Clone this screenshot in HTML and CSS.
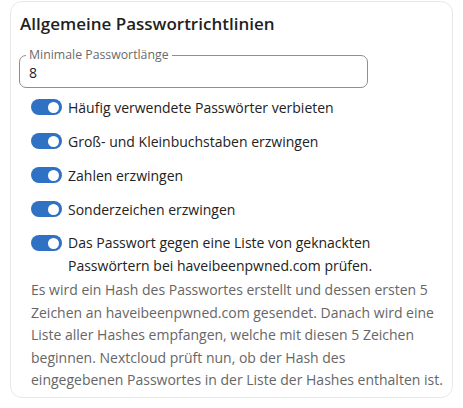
FILE: index.html
```html
<!DOCTYPE html>
<html lang="de">
<head>
<meta charset="utf-8">
<link rel="stylesheet" href="styles.css">
</head>
<body>
<section class="card">
  <h2 class="title">Allgemeine Passwortrichtlinien</h2>
  <fieldset class="field">
    <legend class="field-label">Minimale Passwortlänge</legend>
    <div class="field-value">8</div>
  </fieldset>
  <ul class="toggles">
    <li class="toggle-row"><span class="switch"><span class="knob"></span></span><span class="toggle-text">Häufig verwendete Passwörter verbieten</span></li>
    <li class="toggle-row"><span class="switch"><span class="knob"></span></span><span class="toggle-text">Groß- und Kleinbuchstaben erzwingen</span></li>
    <li class="toggle-row"><span class="switch"><span class="knob"></span></span><span class="toggle-text">Zahlen erzwingen</span></li>
    <li class="toggle-row"><span class="switch"><span class="knob"></span></span><span class="toggle-text">Sonderzeichen erzwingen</span></li>
    <li class="toggle-row multi"><span class="switch"><span class="knob"></span></span><span class="toggle-text">Das Passwort gegen eine Liste von geknackten<br>Passwörtern bei haveibeenpwned.com prüfen.</span></li>
  </ul>
  <p class="hint">Es wird ein Hash des Passwortes erstellt und dessen ersten 5<br>Zeichen an haveibeenpwned.com gesendet. Danach wird eine<br>Liste aller Hashes empfangen, welche mit diesen 5 Zeichen<br>beginnen. Nextcloud prüft nun, ob der Hash des<br>eingegebenen Passwortes in der Liste der Hashes enthalten ist.</p>
</section>
</body>
</html>
```
FILE: styles.css
```css
html, body {
  margin: 0;
  padding: 0;
  background: #ffffff;
}
body {
  font-family: "Open Sans", "Noto Sans", sans-serif;
  color: #222222;
  font-size: 14px;
}
.card {
  margin: 1px 0 0 10px;
  width: 443px;
  height: 397px;
  box-sizing: border-box;
  border: 1px solid #e8e8e8;
  border-radius: 12px;
  padding: 9px 4px 0 9px;
}
.title {
  margin: 0;
  font-size: 17px;
  font-weight: 600;
  line-height: 26px;
  color: #1f1f1f;
}
.field {
  margin: 11px 80px 0 -1px;
  padding: 0 9px 7px 9px;
  border: 1px solid #8f8f8f;
  border-radius: 7px;
}
.field-label {
  padding: 0 3px;
  margin-left: -3px;
  font-size: 12.3px;
  line-height: 14px;
  color: #6b6b6b;
}
.field-value {
  font-size: 14px;
  line-height: 15px;
  margin-top: 3px;
  color: #222222;
}
.toggles {
  list-style: none;
  margin: 2px 0 0 0;
  padding: 0 0 0 11px;
}
.toggle-row {
  display: flex;
  align-items: center;
  gap: 6px;
  min-height: 34px;
}
.toggle-row.multi {
  align-items: flex-start;
  line-height: 22.5px;
  padding-top: 6px;
}
.toggle-row.multi .switch {
  margin-top: 3px;
}
.switch {
  flex: none;
  width: 31px;
  height: 16px;
  border-radius: 8px;
  background: #2f71c3;
  display: flex;
  align-items: center;
  justify-content: flex-end;
  padding-right: 3px;
  box-sizing: border-box;
}
.knob {
  width: 11px;
  height: 11px;
  border-radius: 50%;
  background: #ffffff;
}
.toggle-text {
  color: #222222;
}
.hint {
  margin: 2px 0 0 11px;
  line-height: 22.5px;
  color: #666666;
  white-space: nowrap;
}
```
